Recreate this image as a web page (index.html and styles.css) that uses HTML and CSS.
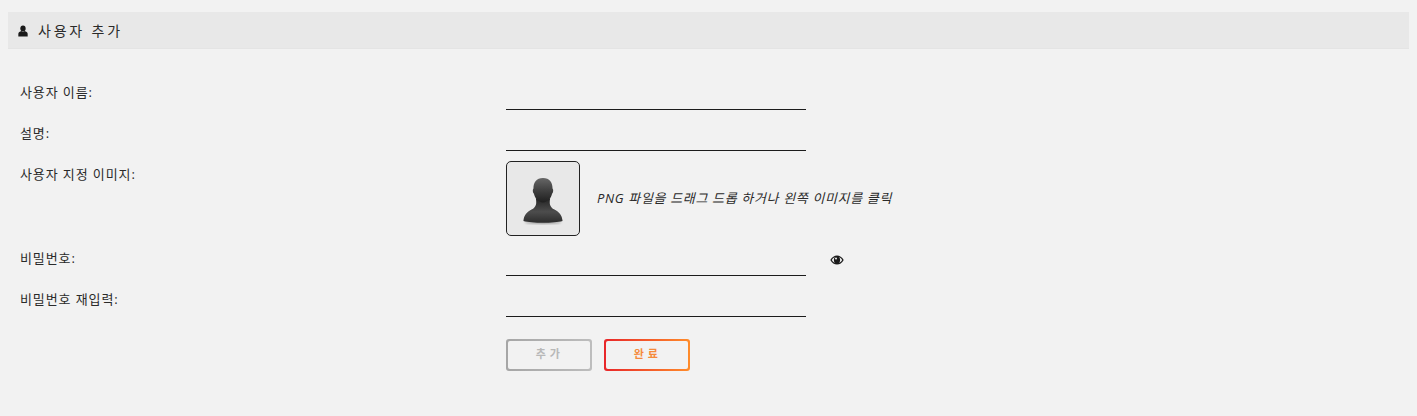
FILE: index.html
```html
<!DOCTYPE html>
<html lang="ko">
<head>
    <meta charset="UTF-8">
    <title>사용자 추가</title>
    <link rel="stylesheet" href="styles.css">
</head>
<body>
    <div class="title-bar">
        <svg class="title-icon" viewBox="0 0 12 13">
            <ellipse cx="6" cy="3.5" rx="3.2" ry="3.5" fill="#1a1a1a"/>
            <path d="M0.4 13 V9.8 C0.4 8 2.4 7.2 4 6.6 C5 7.6 7 7.6 8 6.6 C9.6 7.2 11.6 8 11.6 9.8 V13 Z" fill="#1a1a1a"/>
        </svg>
        <span class="title-text">사용자 추가</span>
    </div>

    <form class="user-form">
        <label class="row-label row-first">사용자 이름:</label>
        <div class="row-field row-first"><input type="text" class="line-input"></div>

        <label class="row-label">설명:</label>
        <div class="row-field"><input type="text" class="line-input"></div>

        <label class="row-label row-image-label">사용자 지정 이미지:</label>
        <div class="image-field">
            <div class="image-box">
                <svg class="avatar" viewBox="0 0 44 50">
                    <defs>
                        <linearGradient id="headGrad" x1="0" y1="0" x2="0" y2="1">
                            <stop offset="0" stop-color="#666"/>
                            <stop offset="0.5" stop-color="#404040"/>
                            <stop offset="1" stop-color="#1f1f1f"/>
                        </linearGradient>
                        <linearGradient id="bodyGrad" x1="0" y1="0" x2="0" y2="1">
                            <stop offset="0" stop-color="#222"/>
                            <stop offset="0.55" stop-color="#4d4d4d"/>
                            <stop offset="1" stop-color="#2c2c2c"/>
                        </linearGradient>
                        <filter id="soft"><feGaussianBlur stdDeviation="0.9"/></filter>
                    </defs>
                    <ellipse cx="22" cy="47.5" rx="19" ry="1.5" fill="#999" filter="url(#soft)"/>
                    <path d="M14.5 22 C15.5 28 15 31 10 34 C5 36.5 2 40 1.5 46 C10 48.5 34 48.5 42.5 46 C42 40 39 36.5 34 34 C29 31 28.5 28 29.5 22 Z" fill="url(#bodyGrad)"/>
                    <path d="M22 1 C29 1 32 5.5 32 12 C33 13 33 16 31.5 17.5 C30.5 22 27 26.5 22 26.5 C17 26.5 13.5 22 12.5 17.5 C11 16 11 13 12 12 C12 5.5 15 1 22 1 Z" fill="url(#headGrad)"/>
                </svg>
            </div>
            <span class="image-hint">PNG 파일을 드래그 드롭 하거나 왼쪽 이미지를 클릭</span>
        </div>

        <label class="row-label">비밀번호:</label>
        <div class="row-field">
            <input type="password" class="line-input">
            <svg class="eye-icon" viewBox="0 0 14 10">
                <path d="M0.3 5 C2 2 4.4 0.4 7 0.4 C9.6 0.4 12 2 13.7 5 C12 8 9.6 9.6 7 9.6 C4.4 9.6 2 8 0.3 5 Z" fill="#1c1c1c"/>
                <path d="M1.8 5 C3 3.2 4 2.4 5 2 C4.2 2.8 3.9 3.8 3.9 5 C3.9 6.2 4.2 7.2 5 8 C4 7.6 3 6.8 1.8 5 Z" fill="#f2f2f2"/>
                <path d="M12.2 5 C11 3.2 10 2.4 9 2 C9.8 2.8 10.1 3.8 10.1 5 C10.1 6.2 9.8 7.2 9 8 C10 7.6 11 6.8 12.2 5 Z" fill="#f2f2f2"/>
                <circle cx="6" cy="3.6" r="1" fill="#f2f2f2"/>
            </svg>
        </div>

        <label class="row-label">비밀번호 재입력:</label>
        <div class="row-field"><input type="password" class="line-input"></div>

        <div class="button-row">
            <button type="button" class="grad-btn btn-gray"><span>추 가</span></button>
            <button type="button" class="grad-btn btn-orange"><span>완 료</span></button>
        </div>
    </form>
</body>
</html>
```

FILE: styles.css
```css
* { box-sizing: border-box; }
body {
    font-family: "Open Sans", "Noto Sans CJK KR", sans-serif;
    background-color: #f2f2f2;
    color: #2a2a2a;
    margin: 0;
    padding: 12px 8px 0;
    font-size: 13px;
    letter-spacing: 0.9px;
}
.title-bar {
    display: flex;
    align-items: center;
    height: 37px;
    padding-left: 10px;
    background: #e8e8e8;
    border-bottom: 1px solid #e4e4e4;
}
.title-icon { width: 10px; height: 12px; margin-top: 1px; }
.title-text {
    margin-left: 10px;
    font-size: 14px;
    letter-spacing: 2.8px;
    margin-top: -1px;
}
.user-form {
    display: grid;
    grid-template-columns: 486px 1fr;
    padding: 0 0 0 12px;
    margin-top: 19px;
}
.row-label {
    height: 41px;
    padding-top: 14px;
    line-height: 18px;
}
.row-label.row-first { height: 42px; padding-top: 15px; }
.row-field {
    display: flex;
    align-items: flex-end;
    height: 41px;
}
.row-field.row-first { height: 42px; }
.line-input {
    width: 300px;
    height: 30px;
    border: none;
    border-bottom: 1px solid #1c1c1c;
    background: transparent;
    outline: none;
}
.row-image-label { height: 84px; padding-top: 14px; }
.image-field {
    display: flex;
    align-items: flex-start;
    height: 84px;
    padding-top: 10px;
}
.image-box {
    display: flex;
    align-items: center;
    justify-content: center;
    width: 74px;
    height: 75px;
    background: #e8e8e8;
    border: 1px solid #222;
    border-radius: 5px;
}
.avatar { width: 42px; height: 48px; margin-top: 4px; }
.image-hint {
    margin: 28px 0 0 17px;
    font-size: 13px;
    line-height: 18px;
    font-style: italic;
    letter-spacing: 0.65px;
}
.eye-icon {
    width: 14px;
    height: 10px;
    margin: 0 0 11px 24px;
}
.button-row {
    grid-column: 2;
    display: flex;
    gap: 12px;
    margin-top: 22px;
}
.grad-btn {
    width: 86px;
    height: 32px;
    padding: 2px;
    border: none;
    border-radius: 3px;
    font-family: inherit;
    font-size: 11px;
    font-weight: 600;
    letter-spacing: 0.5px;
    cursor: pointer;
}
.grad-btn span {
    display: block;
    height: 100%;
    padding-right: 2px;
    line-height: 26px;
    background: #f2f2f2;
    border-radius: 2px;
}
.btn-gray { background: linear-gradient(to right, #a6a6a6, #bdbdbd); color: #b8b8b8; }
.btn-orange { background: linear-gradient(to right, #e8262a, #ff8c2a); color: #f58a3c; }
```
